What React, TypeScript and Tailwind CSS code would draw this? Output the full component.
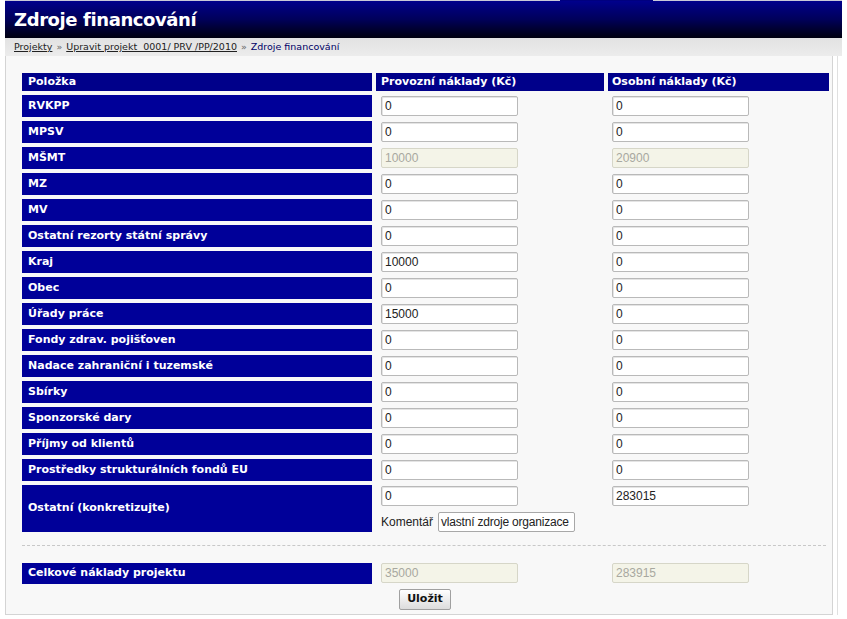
import React from "react";

const rows: [string, string, string, boolean?][] = [
  ["RVKPP", "0", "0"],
  ["MPSV", "0", "0"],
  ["MŠMT", "10000", "20900", true],
  ["MZ", "0", "0"],
  ["MV", "0", "0"],
  ["Ostatní rezorty státní správy", "0", "0"],
  ["Kraj", "10000", "0"],
  ["Obec", "0", "0"],
  ["Úřady práce", "15000", "0"],
  ["Fondy zdrav. pojišťoven", "0", "0"],
  ["Nadace zahraniční i tuzemské", "0", "0"],
  ["Sbírky", "0", "0"],
  ["Sponzorské dary", "0", "0"],
  ["Příjmy od klientů", "0", "0"],
  ["Prostředky strukturálních fondů EU", "0", "0"],
];

function Field({ value, disabled, w }: { value: string; disabled?: boolean; w: string }) {
  return (
    <div
      className={
        "h-[20px] rounded-[2px] border px-[3px] flex items-center text-[12px] leading-none " +
        w +
        (disabled
          ? " bg-[#f4f4e8] border-[#d6d6c8] text-[#a8a8a0]"
          : " bg-white border-[#b9b9b9] text-[#222] shadow-[inset_1px_1px_0_#e4e4e4]")
      }
      style={{ fontFamily: '"Liberation Sans", Arial, sans-serif' }}
    >
      {value}
    </div>
  );
}

function Label({ text, h = "h-[22px]" }: { text: string; h?: string }) {
  return (
    <div className={"bg-[#000099] text-white font-bold text-[11px] pl-[6px] flex items-center " + h}>
      {text}
    </div>
  );
}

export default function App() {
  return (
    <div
      className="w-[847px] h-[619px] bg-white overflow-hidden"
      style={{ fontFamily: '"DejaVu Sans", Verdana, sans-serif' }}
    >
      <div className="ml-[5px] w-[837px]">
        {/* top strip */}
        <div className="flex h-[1px]">
          <div className="w-[555px] bg-[#c8c8d8]" />
          <div className="w-[93px] bg-[#000080]" />
          <div className="flex-1 bg-[#c8c8d8]" />
        </div>
        {/* header */}
        <div className="h-[37px] bg-gradient-to-b from-[#00008c] via-[#00005a] to-[#000010] flex items-center pl-[9px]">
          <span className="text-white font-bold text-[18px] tracking-[-0.4px]">Zdroje financování</span>
        </div>
        {/* breadcrumb */}
        <div className="h-[18px] bg-gradient-to-b from-[#e2e2e2] to-[#ececec] flex items-center pl-[9px] text-[9.5px] text-[#222]">
          <span className="underline">Projekty</span>
          <span className="text-[#666] mx-[4px]">»</span>
          <span className="underline">Upravit projekt&nbsp; 0001/ PRV /PP/2010</span>
          <span className="text-[#666] mx-[4px]">»</span>
          <span className="text-[#000066]">Zdroje financování</span>
        </div>
        {/* body */}
        <div className="flex">
          <div className="w-[828px] h-[559px] border-l border-r border-b border-[#d4d4d4] bg-[#f8f8f8] pt-[17px] pl-[16px]">
            <div className="grid grid-cols-[350px_228px_221px] gap-x-[4px] gap-y-[4px]">
              <div className="h-[18px] bg-[#00008a] text-white font-bold text-[11px] pl-[6px] flex items-center">Položka</div>
              <div className="h-[18px] bg-[#00008a] text-white font-bold text-[11px] pl-[5px] flex items-center">Provozní náklady (Kč)</div>
              <div className="h-[18px] bg-[#00008a] text-white font-bold text-[11px] pl-[4px] flex items-center">Osobní náklady (Kč)</div>
              {rows.map(([name, a, b, dis]) => (
                <React.Fragment key={name}>
                  <Label text={name} />
                  <div className="pl-[5px] pt-[1px]">
                    <Field value={a} disabled={dis} w="w-[137px]" />
                  </div>
                  <div className="pl-[4px] pt-[1px]">
                    <Field value={b} disabled={dis} w="w-[137px]" />
                  </div>
                </React.Fragment>
              ))}
              <Label text="Ostatní (konkretizujte)" h="h-[47px]" />
              <div className="pl-[5px] pt-[1px] flex flex-col gap-[6px]">
                <Field value="0" w="w-[137px]" />
                <div className="flex items-center gap-[5px]">
                  <span className="text-[12px] text-[#222]" style={{ fontFamily: '"Liberation Sans", Arial, sans-serif' }}>Komentář</span>
                  <div
                    className="w-[137px] h-[20px] bg-white border border-[#a8a8a8] rounded-[2px] px-[2px] flex items-center text-[12px] tracking-[-0.2px] text-[#222] whitespace-nowrap overflow-hidden"
                    style={{ fontFamily: '"Liberation Sans", Arial, sans-serif' }}
                  >
                    vlastní zdroje organizace
                  </div>
                </div>
              </div>
              <div className="pl-[4px] pt-[1px]">
                <Field value="283015" w="w-[137px]" />
              </div>
            </div>
            <div className="w-[804px] mt-[13px] border-t border-dashed border-[#c8c8c8]" />
            <div className="grid grid-cols-[350px_228px_221px] gap-x-[4px] mt-[17px]">
              <Label text="Celkové náklady projektu" h="h-[21px]" />
              <div className="pl-[5px]">
                <Field value="35000" disabled w="w-[137px]" />
              </div>
              <div className="pl-[4px]">
                <Field value="283915" disabled w="w-[137px]" />
              </div>
            </div>
            <div className="flex justify-center w-[804px] mt-[5px]">
              <div className="w-[52px] h-[21px] ml-[2px] border border-[#a0a0a0] rounded-[2px] bg-gradient-to-b from-white to-[#dcdcdc] flex items-center justify-center text-[11px] font-bold text-[#111]" style={{ fontFamily: '"DejaVu Sans", Tahoma, sans-serif' }}>
                Uložit
              </div>
            </div>
          </div>
          <div className="w-[4px]" />
          <div className="w-[1px] h-[559px] bg-[#e0e0e0]" />
        </div>
      </div>
    </div>
  );
}
